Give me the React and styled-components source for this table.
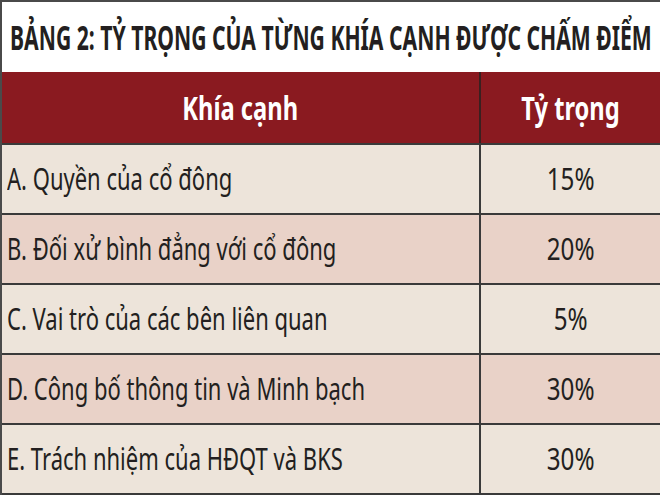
import React from 'react';
import styled, { createGlobalStyle } from 'styled-components';

const GlobalStyle = createGlobalStyle`
  html, body {
    margin: 0;
    padding: 0;
    background: #ffffff;
    overflow: hidden;
  }
`;

const font = `"Noto Sans", "DejaVu Sans", sans-serif`;

const Frame = styled.div`
  width: 664px;
  border-top: 2px solid #4a4a4a;
  border-left: 2px solid #4a4a4a;
  font-family: ${font};
  color: #231f20;
`;

const Title = styled.div`
  height: 70px;
  display: flex;
  align-items: center;
  padding-left: 8px;
  font-weight: 700;
  font-size: 34px;
  white-space: nowrap;
  background: #ffffff;
`;

// condensed look: the source face is a narrow one, so squeeze the text
const Squeeze = styled.span`
  display: inline-block;
  white-space: nowrap;
  transform: scaleX(${(p) => p.$sx});
  transform-origin: ${(p) => (p.$center ? 'center' : 'left')} center;
`;

const Grid = styled.div`
  display: grid;
  grid-template-columns: 477px 1fr;
  border-bottom: 2px solid #3a3a3a;
`;

const HeadCell = styled.div`
  height: 71px;
  display: flex;
  align-items: center;
  justify-content: center;
  padding-right: ${(p) => (p.$divider ? '6px' : '0')};
  background: #8a1a20;
  color: #ffffff;
  font-weight: 700;
  font-size: 32px;
  border-left: ${(p) => (p.$divider ? '2px solid #3a2020' : 'none')};
  box-sizing: border-box;
`;

const Cell = styled.div`
  height: 70px;
  display: flex;
  align-items: center;
  justify-content: ${(p) => (p.$center ? 'center' : 'flex-start')};
  padding-left: ${(p) => (p.$center ? '0' : '5px')};
  padding-right: ${(p) => (p.$center ? '6px' : '0')};
  padding-bottom: 3px;
  background: ${(p) => (p.$shade ? '#e9d2c8' : '#ede4da')};
  border-top: 2px solid #3a3a3a;
  border-left: ${(p) => (p.$divider ? '2px solid #3a3a3a' : 'none')};
  font-size: 31px;
  box-sizing: border-box;
  overflow: visible;
`;

const rows = [
  ['A. Quyền của cổ đông', '15%'],
  ['B. Đối xử bình đẳng với cổ đông', '20%'],
  ['C. Vai trò của các bên liên quan', '5%'],
  ['D. Công bố thông tin và Minh bạch', '30%'],
  ['E. Trách nhiệm của HĐQT và BKS', '30%'],
];

export default function App() {
  return (
    <>
      <GlobalStyle />
      <Frame>
        <Title>
          <Squeeze $sx={0.622}>BẢNG 2: TỶ TRỌNG CỦA TỪNG KHÍA CẠNH ĐƯỢC CHẤM ĐIỂM</Squeeze>
        </Title>
        <Grid>
          <HeadCell>
            <Squeeze $sx={0.74} $center>Khía cạnh</Squeeze>
          </HeadCell>
          <HeadCell $divider>
            <Squeeze $sx={0.74} $center>Tỷ trọng</Squeeze>
          </HeadCell>
          {rows.map(([label, value], i) => (
            <React.Fragment key={label}>
              <Cell $shade={i % 2 === 1}>
                <Squeeze $sx={0.71}>{label}</Squeeze>
              </Cell>
              <Cell $shade={i % 2 === 1} $divider $center>
                <Squeeze $sx={0.78} $center>{value}</Squeeze>
              </Cell>
            </React.Fragment>
          ))}
        </Grid>
      </Frame>
    </>
  );
}
